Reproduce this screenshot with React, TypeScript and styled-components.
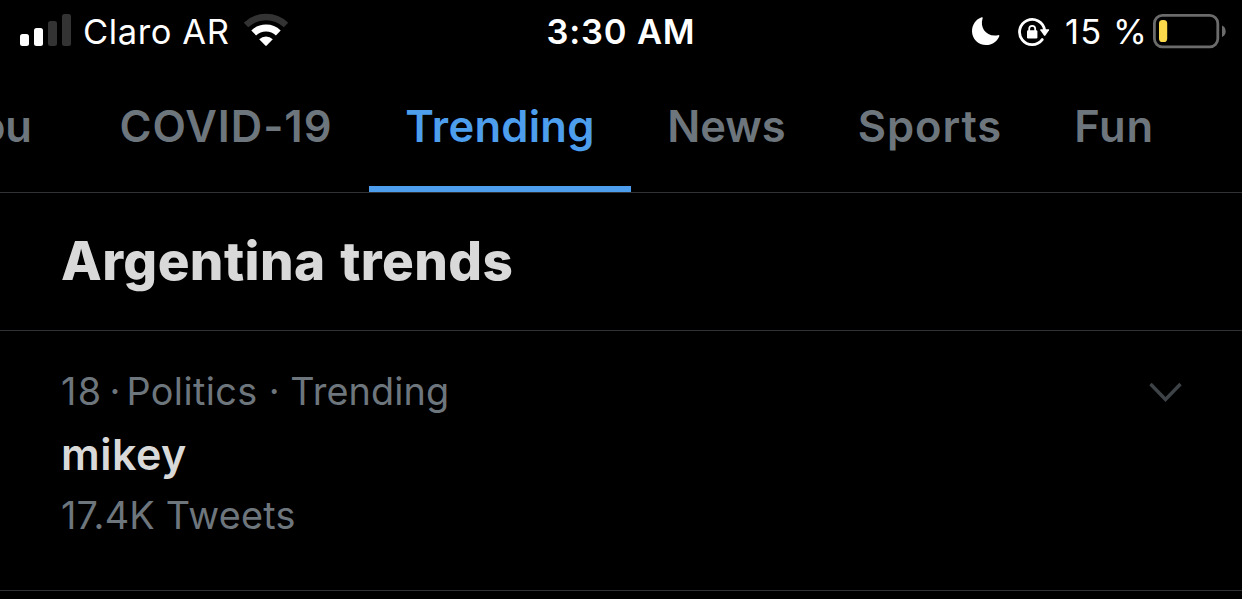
import React from "react";
import styled, { createGlobalStyle } from "styled-components";

const GlobalStyle = createGlobalStyle`
  * { box-sizing: border-box; }
  html, body { margin: 0; background: #000; }
  body { font-family: Inter, "Liberation Sans", sans-serif; font-kerning: normal; }
`;

const Screen = styled.main`
  width: 1242px;
  height: 599px;
  overflow: hidden;
  background: #000;
`;

const StatusBar = styled.header`
  display: grid;
  grid-template-columns: 1fr auto 1fr;
  height: 63px;
  color: #fff;
`;

const StatusGroup = styled.div<{ $end?: boolean }>`
  display: flex;
  justify-content: ${(p) => (p.$end ? "flex-end" : "flex-start")};
  padding: ${(p) => (p.$end ? "0 16px 0 0" : "0 0 0 20px")};
  svg { flex: none; display: block; }
`;

const StatusText = styled.span<{ $track?: number; $bold?: boolean }>`
  font-size: 34.5px;
  line-height: 63px;
  white-space: pre;
  font-weight: ${(p) => (p.$bold ? 600 : 400)};
  letter-spacing: ${(p) => p.$track ?? 0}px;
`;

const Tabs = styled.nav`
  display: flex;
  height: 130px;
  border-bottom: 1px solid #2f3336;
`;

const Tab = styled.a<{ $width: number; $track: number; $active?: boolean; $clipped?: boolean }>`
  flex: none;
  display: flex;
  justify-content: ${(p) => (p.$clipped ? "flex-end" : "center")};
  width: ${(p) => p.$width}px;
  padding: ${(p) => (p.$clipped ? "0 51px 0 0" : "0")};
  border-bottom: 6px solid ${(p) => (p.$active ? "#4d9eec" : "transparent")};
  color: ${(p) => (p.$active ? "#4d9eec" : "#6e767d")};
  font-size: 43.5px;
  font-weight: 600;
  line-height: 127px;
  letter-spacing: ${(p) => p.$track}px;
  white-space: nowrap;
`;

const SectionHeader = styled.section`
  height: 138px;
  padding: 0 61px;
  border-bottom: 1px solid #2f3336;
`;

const Heading = styled.h1`
  margin: 0;
  color: #d9d9d9;
  font-size: 53px;
  font-weight: 800;
  line-height: 136px;
  letter-spacing: 0.4px;
  word-spacing: 2.5px;
`;

const Trend = styled.article`
  display: flex;
  justify-content: space-between;
  height: 260px;
  padding: 30px 60px 0 61px;
  border-bottom: 1px solid #2f3336;
`;

const TrendBody = styled.div`
  display: flex;
  flex-direction: column;
`;

const Meta = styled.div`
  color: #6e767d;
  font-size: 37.8px;
  line-height: 60px;
  white-space: pre;
`;

const MetaPart = styled.span<{ $track?: number; $space?: number }>`
  letter-spacing: ${(p) => p.$track ?? 0}px;
  word-spacing: ${(p) => p.$space ?? 0}px;
`;

const Name = styled.div`
  margin-top: 2px;
  color: #d9d9d9;
  font-size: 43px;
  font-weight: 600;
  line-height: 62px;
  letter-spacing: 0.5px;
`;

const Caret = styled.svg`
  display: block;
  margin-top: 20px;
`;

const SignalIcon = () => (
  <svg width="52" height="63" viewBox="20 0 52 63" fill="#fff">
    <rect x="20" y="34" width="9" height="12" rx="2.5" />
    <rect x="34" y="28" width="9" height="18" rx="2.5" />
    <rect x="48" y="21" width="9" height="25" rx="2.5" fill="#333" />
    <rect x="62" y="14" width="9" height="32" rx="2.5" fill="#333" />
  </svg>
);

const WifiIcon = () => (
  <svg width="46" height="63" viewBox="243 0 46 63" fill="none">
    <path d="M246 25 A29 29 0 0 1 286 25" stroke="#333" strokeWidth="6.4" />
    <path d="M253.7 33 A17.6 17.6 0 0 1 278.3 33" stroke="#fff" strokeWidth="6.8" />
    <path d="M259.2 39.2 A10 10 0 0 1 272.8 39.2 L266.7 45.6 Q266 46.2 265.3 45.6Z" fill="#fff" />
  </svg>
);

const MoonIcon = () => (
  <svg width="28" height="63" viewBox="971 0 28 63" fill="#fff">
    <path d="M980.6 17.3 Q982.1 17 981.6 18.4 C978.5 27.5 985.5 37.5 997 35.2 Q998.8 34.8 998.2 36.4 C996 41.6 991 45 985 45 C977.2 45 971 38.8 971 31.2 C971 24.7 975 19.3 980.6 17.3Z" />
  </svg>
);

const RotationLockIcon = () => (
  <svg width="33" height="63" viewBox="1016 0 33 63">
    <path d="M1041.2 39.6 A12.6 12.6 0 1 1 1043.6 30" fill="none" stroke="#fff" strokeWidth="2.8" strokeLinecap="round" />
    <path d="M1039.8 29.2 H1047.6 Q1048.6 29.4 1048 30.3 L1044.4 35.6 Q1043.7 36.4 1043 35.6 L1039.3 30.3 Q1038.8 29.4 1039.8 29.2Z" fill="#fff" />
    <rect x="1026" y="30.2" width="10.4" height="8.2" rx="1.2" fill="#fff" />
    <path d="M1028.2 31 V28.8 A3 3 0 0 1 1034.2 28.8 V31" fill="none" stroke="#fff" strokeWidth="1.8" />
  </svg>
);

const BatteryIcon = () => (
  <svg width="73" height="63" viewBox="1153 0 73 63">
    <rect x="1154.4" y="15.4" width="63.4" height="31.4" rx="8" fill="none" stroke="#6b6b6b" strokeWidth="2.8" />
    <rect x="1159" y="20" width="8.2" height="22" rx="3.6" fill="#fcd94b" />
    <path d="M1222 25.4 A6.4 6.4 0 0 1 1222 37Z" fill="#6b6b6b" />
  </svg>
);

const IconSlot = styled.span<{ $left: number }>`
  display: block;
  margin-left: ${(p) => p.$left}px;
`;

const tabs = [
  { label: "COVID-19", width: 286, track: 0.95 },
  { label: "Trending", width: 262, track: 0.25, active: true },
  { label: "News", width: 191, track: 0 },
  { label: "Sports", width: 216, track: 0.9 },
  { label: "Fun", width: 152, track: 0.7 },
];

export default function App() {
  return (
    <Screen>
      <GlobalStyle />
      <StatusBar>
        <StatusGroup>
          <SignalIcon />
          <IconSlot $left={11}>
            <StatusText $track={0.6}>Claro AR</StatusText>
          </IconSlot>
          <IconSlot $left={13}>
            <WifiIcon />
          </IconSlot>
        </StatusGroup>
        <StatusText $bold $track={0.8}>3:30 AM</StatusText>
        <StatusGroup $end>
          <MoonIcon />
          <IconSlot $left={17}>
            <RotationLockIcon />
          </IconSlot>
          <IconSlot $left={15}>
            <StatusText $track={1.1}>15 %</StatusText>
          </IconSlot>
          <IconSlot $left={5}>
            <BatteryIcon />
          </IconSlot>
        </StatusGroup>
      </StatusBar>
      <Tabs>
        <Tab $width={83} $track={0} $clipped>For you</Tab>
        {tabs.map((t) => (
          <Tab key={t.label} $width={t.width} $track={t.track} $active={t.active}>
            {t.label}
          </Tab>
        ))}
      </Tabs>
      <SectionHeader>
        <Heading>Argentina trends</Heading>
      </SectionHeader>
      <Trend>
        <TrendBody>
          <Meta>
            <MetaPart $track={1.5} $space={-5.5}>{"18 "}</MetaPart>
            <MetaPart $space={-4.5}>{"· "}</MetaPart>
            <MetaPart $track={0.4}>{"Politics "}</MetaPart>
            <MetaPart $track={0.1}>{"· Trending"}</MetaPart>
          </Meta>
          <Name>mikey</Name>
          <Meta>
            <MetaPart $track={0.25}>17.4K Tweets</MetaPart>
          </Meta>
        </TrendBody>
        <Caret width="33" height="22" viewBox="0 0 33 22" fill="none" stroke="#3e4347" strokeWidth="3.4">
          <path d="M1.5 3 L16.5 18.5 L31.5 3" />
        </Caret>
      </Trend>
    </Screen>
  );
}
